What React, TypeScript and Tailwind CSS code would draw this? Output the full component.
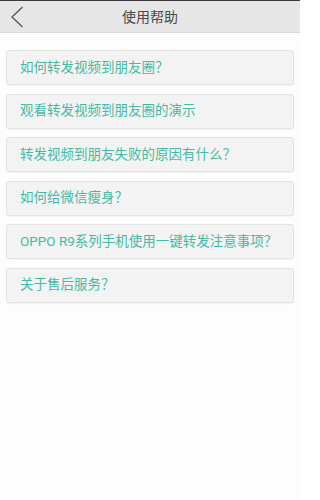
const items = [
  '如何转发视频到朋友圈？',
  '观看转发视频到朋友圈的演示',
  '转发视频到朋友失败的原因有什么？',
  '如何给微信瘦身？',
  'OPPO R9系列手机使用一键转发注意事项？',
  '关于售后服务？',
]

export default function App() {
  return (
    <div
      className="w-[300px] h-[500px] bg-[#fdfdfd] overflow-hidden"
      style={{ fontFamily: 'Roboto, "Noto Sans CJK SC", sans-serif' }}
    >
      {/* Title bar */}
      <div className="h-[33px] bg-[#e6e6e6] border-t border-[#3a3a3a] border-b border-b-[#dadada] relative flex items-center justify-center">
        <svg
          className="absolute left-[10px] top-[5px]"
          width="14"
          height="22"
          viewBox="0 0 14 22"
          fill="none"
        >
          <path d="M12.5 1 L2 11 L12.5 21" stroke="#555" strokeWidth="1.3" />
        </svg>
        <span className="text-[14px] text-[#4a4a4a] leading-none">使用帮助</span>
      </div>

      {/* Help list */}
      <div className="flex flex-col gap-[8.5px] px-[6px] pt-[17px]">
        {items.map(t => (
          <div
            key={t}
            className="h-[35px] flex items-center pl-[13px] bg-[#f3f3f3] border border-[#e3e3e3] rounded-[3px] shadow-[0_1px_1px_rgba(0,0,0,0.04)]"
          >
            <span className="text-[13.5px] text-[#45baa2] leading-none whitespace-nowrap">{t}</span>
          </div>
        ))}
      </div>
    </div>
  )
}
